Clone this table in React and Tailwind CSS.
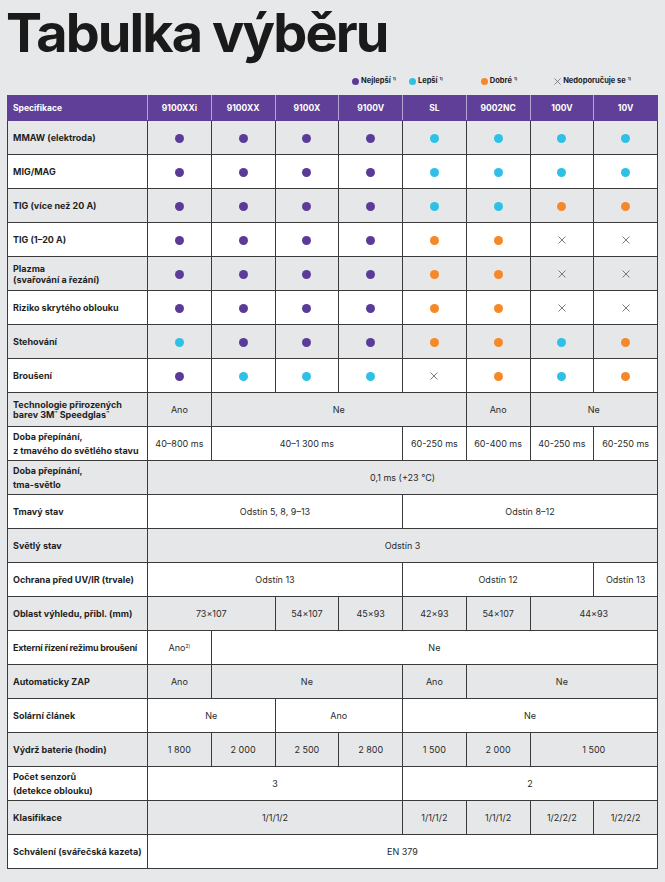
import React from 'react';

const P = 'p', C = 'c', O = 'o', X = 'x';

const dotRows = [
  ['MMAW (elektroda)', [P, P, P, P, C, C, C, C]],
  ['MIG/MAG', [P, P, P, P, C, C, C, C]],
  ['TIG (více než 20 A)', [P, P, P, P, C, C, O, O]],
  ['TIG (1–20 A)', [P, P, P, P, O, O, X, X]],
  [['Plazma', '(svařování a řezání)'], [P, P, P, P, O, O, X, X]],
  ['Riziko skrytého oblouku', [P, P, P, P, O, O, X, X]],
  ['Stehování', [C, P, P, P, O, O, C, O]],
  ['Broušení', [P, C, C, C, X, O, C, O]],
];

// [label, [[text, span], ...], extra label classes]
const specRows = [
  [
    <>Technologie přirozených<br />barev 3M<sup className="text-[5px]">™</sup> Speedglas<sup className="text-[5px]">™</sup></>,
    [['Ano', 1], ['Ne', 4], ['Ano', 1], ['Ne', 2]],
    'leading-[10px]',
  ],
  [
    <>Doba přepínání,<br />z tmavého do světlého stavu</>,
    [['40–800 ms', 1], ['40–1 300 ms', 3], ['60-250 ms', 1], ['60-400 ms', 1], ['40-250 ms', 1], ['60-250 ms', 1]],
    'leading-[14px]',
  ],
  [<>Doba přepínání,<br />tma-světlo</>, [['0,1 ms (+23 °C)', 8]], 'leading-[14px]'],
  ['Tmavý stav', [['Odstín 5, 8, 9–13', 4], ['Odstín 8–12', 4]]],
  ['Světlý stav', [['Odstín 3', 8]]],
  ['Ochrana před UV/IR (trvale)', [['Odstín 13', 4], ['Odstín 12', 3], ['Odstín 13', 1]]],
  ['Oblast výhledu, přibl. (mm)', [['73×107', 2], ['54×107', 1], ['45×93', 1], ['42×93', 1], ['54×107', 1], ['44×93', 2]]],
  ['Externí řízení režimu broušení', [[<>Ano<sup className="text-[5px]">2)</sup></>, 1], ['Ne', 7]], 'whitespace-nowrap tracking-[-0.025em]'],
  ['Automaticky ZAP', [['Ano', 1], ['Ne', 3], ['Ano', 1], ['Ne', 3]]],
  ['Solární článek', [['Ne', 2], ['Ano', 2], ['Ne', 4]]],
  ['Výdrž baterie (hodin)', [['1 800', 1], ['2 000', 1], ['2 500', 1], ['2 800', 1], ['1 500', 1], ['2 000', 1], ['1 500', 2]]],
  [<>Počet senzorů<br />(detekce oblouku)</>, [['3', 4], ['2', 4]], 'leading-[14px]'],
  ['Klasifikace', [['1/1/1/2', 4], ['1/1/1/2', 1], ['1/1/1/2', 1], ['1/2/2/2', 1], ['1/2/2/2', 1]]],
  ['Schválení (svářečská kazeta)', [['EN 379', 8]]],
];

const models = ['9100XXi', '9100XX', '9100X', '9100V', 'SL', '9002NC', '100V', '10V'];

function Mark({ type }) {
  if (type === X) {
    return (
      <svg width="8" height="8" viewBox="0 0 8 8" className="inline-block">
        <path d="M0.5 0.5L7.5 7.5M7.5 0.5L0.5 7.5" stroke="#6b6b6b" strokeWidth="0.9" />
      </svg>
    );
  }
  const bg = type === P ? 'bg-[#5c3b98]' : type === C ? 'bg-[#2fc0e6]' : 'bg-[#f5892a]';
  return <span className={`inline-block w-[9px] h-[9px] rounded-full align-middle ${bg}`} />;
}

const cell = 'border border-[#3b3b3b] text-center align-middle';
const label = 'border border-[#3b3b3b] pl-[5px] pr-1 text-left align-middle font-bold text-[9px] text-[#1f1f1f]';

export default function App() {
  let rowIndex = 0;
  const rowBg = () => (rowIndex++ % 2 === 0 ? 'bg-[#e6e7e9]' : 'bg-white');

  return (
    <div className="min-h-[882px] w-[665px] bg-[#e7e8ea] pt-[2px]" style={{ fontFamily: 'Inter, "Noto Sans", sans-serif' }}>
      <h1 className="pl-[6px] text-[54px] font-bold leading-[62px] tracking-[-0.035em] text-[#1a1a1a]">Tabulka výběru</h1>

      <div className="mt-[10px] flex h-[14px] items-center text-[7.5px] font-bold text-[#222]">
        <div className="ml-[352px] flex items-center gap-[2px]">
          <span className="inline-block h-[7px] w-[7px] rounded-full bg-[#5c3b98]" />
          Nejlepší<sup className="text-[4px]">1)</sup>
        </div>
        <div className="ml-[13px] flex items-center gap-[2px]">
          <span className="inline-block h-[7px] w-[7px] rounded-full bg-[#2fc0e6]" />
          Lepší<sup className="text-[4px]">1)</sup>
        </div>
        <div className="ml-[38px] flex items-center gap-[2px]">
          <span className="inline-block h-[7px] w-[7px] rounded-full bg-[#f5892a]" />
          Dobré<sup className="text-[4px]">1)</sup>
        </div>
        <div className="ml-[37px] flex items-center gap-[2px]">
          <svg width="7" height="7" viewBox="0 0 8 8">
            <path d="M0.5 0.5L7.5 7.5M7.5 0.5L0.5 7.5" stroke="#6b6b6b" strokeWidth="0.9" />
          </svg>
          Nedoporučuje se<sup className="text-[4px]">1)</sup>
        </div>
      </div>

      <table className="ml-[7px] mt-[7px] w-[651px] table-fixed border-collapse text-[9px] text-[#2a2a2a]">
        <colgroup>
          <col className="w-[140px]" />
          {models.map((m) => <col key={m} />)}
        </colgroup>
        <thead>
          <tr className="h-[25px] bg-[#603f99] text-[8.5px] font-bold text-white">
            <th className="border-y border-r border-l border-y-[#603f99] border-l-[#603f99] border-r-[#b6a6d6] pl-[5px] text-left">Specifikace</th>
            {models.map((m, i) => (
              <th key={m} className={`border-y border-y-[#603f99] border-r ${i === 7 ? 'border-r-[#603f99]' : 'border-r-[#b6a6d6]'} text-center`}>{m}</th>
            ))}
          </tr>
        </thead>
        <tbody>
          {dotRows.map(([name, marks]) => (
            <tr key={Array.isArray(name) ? name[0] : name} className={`h-[34px] ${rowBg()}`}>
              <td className={`${label} leading-[11px]`}>
                {Array.isArray(name) ? <>{name[0]}<br />{name[1]}</> : name}
              </td>
              {marks.map((t, i) => (
                <td key={i} className={cell}><Mark type={t} /></td>
              ))}
            </tr>
          ))}
          {specRows.map(([name, cells, extra], r) => (
            <tr key={r} className={`h-[34px] ${rowBg()}`}>
              <td className={`${label} ${extra || ''}`}>{name}</td>
              {cells.map(([text, span], i) => (
                <td key={i} colSpan={span} className={cell}>{text}</td>
              ))}
            </tr>
          ))}
        </tbody>
      </table>
    </div>
  );
}
